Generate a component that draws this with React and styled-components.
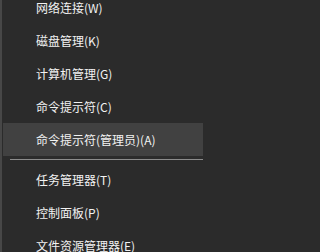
import React from 'react';
import styled, { createGlobalStyle } from 'styled-components';

const GlobalStyle = createGlobalStyle`
  html, body {
    margin: 0;
    padding: 0;
    background: #2b2b2b;
    overflow: hidden;
  }
`;

const Menu = styled.div`
  width: 208px;
  height: 252px;
  box-sizing: border-box;
  background: #2b2b2b;
  border-left: 2px solid #474747;
  padding: 0 5px 0 1px;
  overflow: hidden;
  font-family: "Noto Sans CJK SC", "Noto Sans", sans-serif;
  font-size: 12px;
  color: #f2f2f2;
`;

const List = styled.div`
  margin-top: -9px;
  display: flex;
  flex-direction: column;
`;

const Item = styled.div`
  height: 33px;
  display: flex;
  align-items: center;
  padding-left: 33px;
  background: ${p => (p.$active ? '#414141' : 'transparent')};
  white-space: nowrap;
`;

const Separator = styled.div`
  height: 7px;
  display: flex;
  align-items: center;
  padding: 0 0 0 7px;

  &::after {
    content: '';
    flex: 1;
    height: 1px;
    background: #8c8c8c;
  }
`;

const groups = [
  [
    { label: '网络连接(W)' },
    { label: '磁盘管理(K)' },
    { label: '计算机管理(G)' },
    { label: '命令提示符(C)' },
    { label: '命令提示符(管理员)(A)', active: true },
  ],
  [
    { label: '任务管理器(T)' },
    { label: '控制面板(P)' },
    { label: '文件资源管理器(E)' },
  ],
];

export default function App() {
  return (
    <>
      <GlobalStyle />
      <Menu>
        <List>
          {groups.map((group, gi) => (
            <React.Fragment key={gi}>
              {gi > 0 && <Separator />}
              {group.map(item => (
                <Item key={item.label} $active={item.active}>
                  {item.label}
                </Item>
              ))}
            </React.Fragment>
          ))}
        </List>
      </Menu>
    </>
  );
}
